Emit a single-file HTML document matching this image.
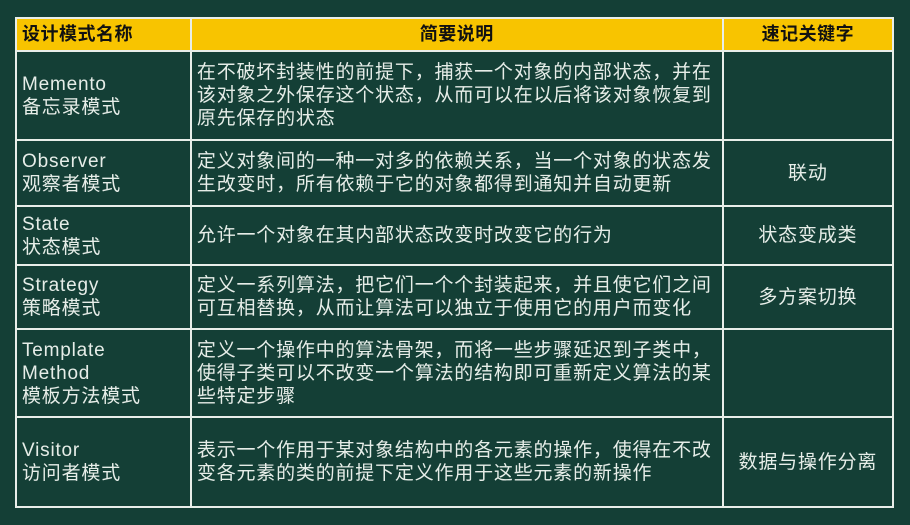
<!DOCTYPE html>
<html><head><meta charset="utf-8"><style>
html,body{margin:0;padding:0}
body{width:910px;height:525px;background:#143f36;overflow:hidden;position:relative;font-family:"Liberation Sans","Noto Sans CJK SC",sans-serif;}
table{position:absolute;left:15px;top:17px;border-collapse:collapse;width:879px;}
td,th{border:2px solid #e8eee9;color:#e6ede8;font-size:19px;letter-spacing:0.8px;line-height:23px;padding:0 0 0 5px;vertical-align:middle;text-align:left;font-weight:normal;white-space:nowrap}
th{background:#f8c400;color:#111;font-weight:bold;height:31px;font-size:18px;letter-spacing:0.5px}
.c{text-align:center;padding:0}
</style></head><body>
<table>
<colgroup><col style="width:176px"><col style="width:532px"><col style="width:171px"></colgroup>
<tr><th>设计模式名称</th><th class="c">简要说明</th><th class="c">速记关键字</th></tr>
<tr style="height:89px"><td>Memento<br>备忘录模式</td><td>在不破坏封装性的前提下，捕获一个对象的内部状态，并在<br>该对象之外保存这个状态，从而可以在以后将该对象恢复到<br>原先保存的状态</td><td class="c"></td></tr>
<tr style="height:66px"><td>Observer<br>观察者模式</td><td>定义对象间的一种一对多的依赖关系，当一个对象的状态发<br>生改变时，所有依赖于它的对象都得到通知并自动更新</td><td class="c">联动</td></tr>
<tr style="height:59px"><td>State<br>状态模式</td><td>允许一个对象在其内部状态改变时改变它的行为</td><td class="c">状态变成类</td></tr>
<tr style="height:64px"><td>Strategy<br>策略模式</td><td>定义一系列算法，把它们一个个封装起来，并且使它们之间<br>可互相替换，从而让算法可以独立于使用它的用户而变化</td><td class="c">多方案切换</td></tr>
<tr style="height:88px"><td>Template<br>Method<br>模板方法模式</td><td>定义一个操作中的算法骨架，而将一些步骤延迟到子类中，<br>使得子类可以不改变一个算法的结构即可重新定义算法的某<br>些特定步骤</td><td class="c"></td></tr>
<tr style="height:90px"><td>Visitor<br>访问者模式</td><td>表示一个作用于某对象结构中的各元素的操作，使得在不改<br>变各元素的类的前提下定义作用于这些元素的新操作</td><td class="c">数据与操作分离</td></tr>
</table>
</body></html>
